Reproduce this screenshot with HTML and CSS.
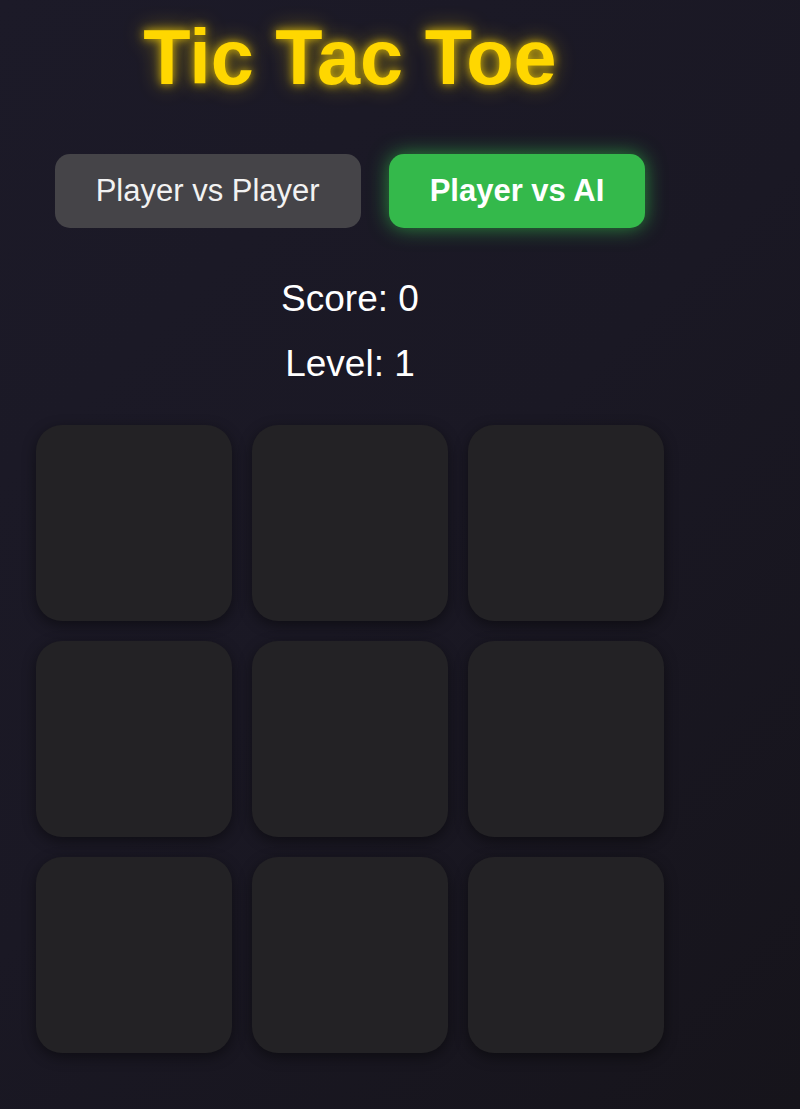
FILE: index.html
```html
<!DOCTYPE html>
<html lang="en">
<head>
<meta charset="utf-8">
<title>Tic Tac Toe</title>
<link rel="stylesheet" href="styles.css">
</head>
<body>
<div class="app">
  <h1 class="title">Tic Tac Toe</h1>
  <div class="modes">
    <button class="mode">Player vs Player</button>
    <button class="mode mode-active">Player vs AI</button>
  </div>
  <div class="stat stat-score">Score: 0</div>
  <div class="stat stat-level">Level: 1</div>
  <div class="board">
    <div class="cell"></div>
    <div class="cell"></div>
    <div class="cell"></div>
    <div class="cell"></div>
    <div class="cell"></div>
    <div class="cell"></div>
    <div class="cell"></div>
    <div class="cell"></div>
    <div class="cell"></div>
  </div>
</div>
</body>
</html>
```
FILE: styles.css
```css
html, body {
  margin: 0;
  padding: 0;
}
body {
  min-height: 1109px;
  background: linear-gradient(135deg, #1c1a28 0%, #1a1824 50%, #16141b 100%);
  font-family: "Liberation Sans", Arial, sans-serif;
  color: #ffffff;
}
.app {
  width: 700px;
  padding-top: 14px;
  display: flex;
  flex-direction: column;
  align-items: center;
}
.title {
  margin: 0;
  font-size: 77.5px;
  font-weight: bold;
  line-height: 87px;
  color: #ffd700;
  text-shadow: 0 0 10px rgba(255, 215, 0, 0.8), 0 0 22px rgba(255, 215, 0, 0.45);
}
.modes {
  margin-top: 53px;
  display: flex;
  gap: 28px;
}
.mode {
  font-family: "Liberation Sans", Arial, sans-serif;
  font-size: 31px;
  line-height: 36px;
  padding: 19px 41px;
  border: none;
  border-radius: 15px;
  background: #454448;
  color: #f2f2f2;
}
.mode-active {
  background: #34b94b;
  color: #ffffff;
  font-weight: bold;
  box-shadow: 0 0 20px rgba(52, 200, 75, 0.65);
}
.stat {
  font-size: 37px;
  line-height: 42px;
}
.stat-score {
  margin-top: 50px;
}
.stat-level {
  margin-top: 23px;
}
.board {
  margin-top: 40px;
  display: grid;
  grid-template-columns: repeat(3, 196px);
  grid-auto-rows: 196px;
  gap: 20px;
}
.cell {
  background: #232225;
  border-radius: 26px;
  box-shadow: 0 4px 14px rgba(0, 0, 0, 0.45);
}
```
